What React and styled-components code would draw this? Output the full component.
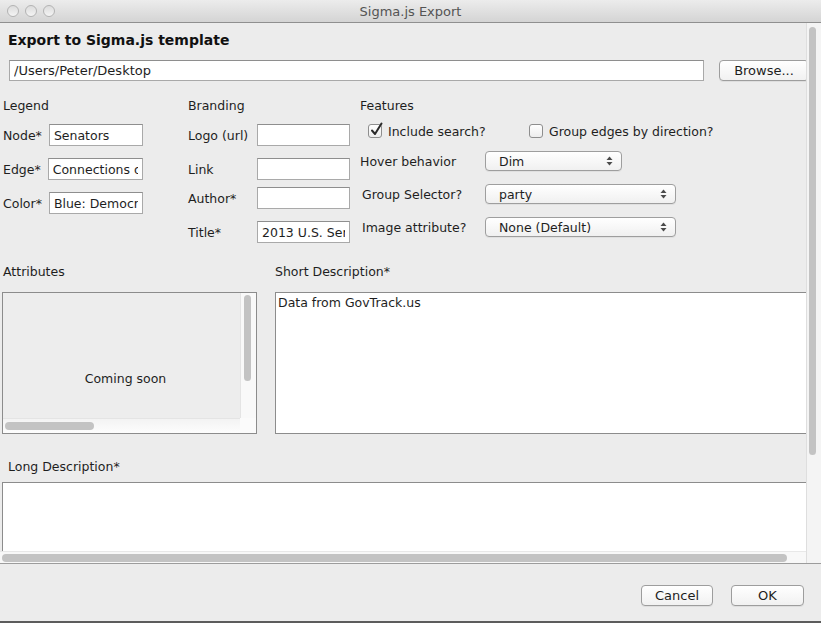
import React from 'react';
import styled, { createGlobalStyle } from 'styled-components';

const GlobalStyle = createGlobalStyle`
  html, body {
    margin: 0;
    padding: 0;
    background: #ececec;
  }
  body {
    font-family: "DejaVu Sans", "Lucida Grande", sans-serif;
    font-size: 12.5px;
    color: #1e1e1e;
  }
  * { box-sizing: border-box; }
`;

const Window = styled.div`
  width: 821px;
  height: 623px;
  display: flex;
  flex-direction: column;
  background: #ececec;
  overflow: hidden;
  border-bottom: 2px solid #5c5c5c;
`;

const TitleBar = styled.div`
  height: 23px;
  flex: none;
  display: grid;
  grid-template-columns: 1fr auto 1fr;
  align-items: center;
  background: linear-gradient(#ececec, #d4d4d4);
  border-bottom: 1px solid #8f8f8f;
`;

const Lights = styled.div`
  display: flex;
  gap: 6px;
  padding-left: 7px;
`;

const Light = styled.span`
  width: 12px;
  height: 12px;
  border-radius: 50%;
  border: 1px solid #b3b3b3;
  background: linear-gradient(#dcdcdc, #f4f4f4);
`;

const WindowTitle = styled.div`
  font-size: 13px;
  color: #545454;
`;

const Body = styled.div`
  height: 541px;
  flex: none;
  display: flex;
  border-bottom: 1px solid #9c9c9c;
`;

const ScrollColumn = styled.div`
  width: 806px;
  display: flex;
  flex-direction: column;
`;

const Viewport = styled.div`
  flex: 1;
  overflow: hidden;
  display: flex;
  flex-direction: column;
`;

const HScroll = styled.div`
  height: 12px;
  flex: none;
  padding: 2px 19px 2px 2px;
  background: #f8f8f8;
  border-top: 1px solid #e8e8e8;
`;

const HThumb = styled.div`
  height: 8px;
  border-radius: 4px;
  background: #c3c3c3;
  width: ${p => p.$width};
`;

const VScroll = styled.div`
  width: 15px;
  flex: none;
  padding: 4px 6px 0 2px;
  background: #f4f4f4;
  border-left: 1px solid #dedede;
`;

const VThumb = styled.div`
  width: 7px;
  height: ${p => p.$height}px;
  border-radius: 4px;
  background: #c3c3c3;
`;

const Heading = styled.h1`
  margin: 8px 0 0 8px;
  font-size: 14px;
  line-height: 18px;
  font-weight: bold;
  color: #111;
`;

const PathRow = styled.div`
  margin-top: 11px;
  display: flex;
  gap: 15px;
  padding-left: 9px;
`;

const TextField = styled.input`
  height: ${p => p.$h || 22}px;
  width: ${p => (p.$w ? `${p.$w}px` : 'auto')};
  flex: ${p => (p.$grow ? 1 : 'none')};
  min-width: 0;
  margin: 0;
  padding: 0 4px;
  font: inherit;
  font-size: ${p => p.$fs || 12.5}px;
  color: #1e1e1e;
  background: #fff;
  border: 1px solid #a9a9a9;
  border-top-color: #8e8e8e;
  outline: none;
`;

const PushButton = styled.button`
  width: ${p => p.$w}px;
  height: 21px;
  flex: none;
  margin: 0;
  padding: 0;
  font: inherit;
  font-size: 13px;
  color: #1e1e1e;
  background: linear-gradient(#ffffff, #f1f1f1);
  border: 1px solid #9d9d9d;
  border-radius: 4px;
  box-shadow: 0 1px 0 rgba(0, 0, 0, 0.06);
`;

const Sections = styled.div`
  margin-top: 17px;
  display: flex;
  padding-left: 3px;
`;

const Column = styled.div`
  width: ${p => p.$w}px;
  margin-right: ${p => p.$mr || 0}px;
  display: flex;
  flex-direction: column;
  flex: none;
`;

const SectionLabel = styled.div`
  line-height: 16px;
`;

const LegendRow = styled.div`
  margin-top: ${p => p.$mt}px;
  display: flex;
  align-items: center;
  gap: 7px;
`;

const BrandRow = styled.div`
  margin-top: ${p => p.$mt}px;
  display: grid;
  grid-template-columns: 69px 93px;
  align-items: center;
`;

const CheckRow = styled.div`
  margin-top: 9px;
  height: 16px;
  display: grid;
  grid-template-columns: 161px auto;
  align-items: center;
  padding-left: 8px;
`;

const CheckItem = styled.label`
  display: flex;
  align-items: center;
  gap: 6px;
`;

const Box = styled.span`
  position: relative;
  width: 14px;
  height: 14px;
  border: 1px solid #8e8e8e;
  border-radius: 3px;
  background: linear-gradient(#ffffff, #ededed);
`;

const Tick = styled.svg`
  position: absolute;
  left: 1px;
  top: -3px;
`;

const SelectRow = styled.div`
  margin-top: ${p => p.$mt}px;
  display: grid;
  grid-template-columns: 125px auto;
  align-items: center;
  padding-left: ${p => p.$pl || 0}px;
`;

const SelectBox = styled.div`
  width: ${p => p.$w}px;
  height: 20px;
  display: flex;
  align-items: center;
  justify-content: space-between;
  padding: 0 8px 0 13px;
  background: linear-gradient(#ffffff, #f0f0f0);
  border: 1px solid #9e9e9e;
  border-radius: 4px;
  box-shadow: 0 1px 0 rgba(0, 0, 0, 0.05);
  margin-left: ${p => -(p.$pl || 0)}px;
`;

const Panels = styled.div`
  margin-top: 21px;
  display: flex;
  padding-left: 2px;
  gap: 18px;
`;

const Panel = styled.div`
  width: ${p => p.$w}px;
  flex: none;
  display: flex;
  flex-direction: column;
`;

const PanelLabel = styled.div`
  line-height: 16px;
  margin: 0 0 12px ${p => p.$ml || 0}px;
`;

const AttrBox = styled.div`
  height: 142px;
  display: grid;
  grid-template-columns: 1fr 16px;
  grid-template-rows: 1fr 15px;
  border: 1px solid #8c8c8c;
  background: #ededed;
`;

const AttrContent = styled.div`
  display: flex;
  justify-content: center;
  padding: 78px 0 0 8px;
  line-height: 16px;
`;

const InnerVTrack = styled.div`
  background: #f9f9f9;
  border-left: 1px solid #e4e4e4;
  padding: 2px 0 0 3px;
`;

const InnerHTrack = styled.div`
  background: linear-gradient(#f3f3f3, #fdfdfd);
  border-top: 1px solid #e4e4e4;
  padding: 3px 0 0 2px;
`;

const Corner = styled.div`
  background: #fbfbfb;
`;

const TextArea = styled.div`
  height: ${p => p.$h}px;
  width: ${p => p.$w}px;
  flex: none;
  background: #fff;
  border: 1px solid #8c8c8c;
  border-right: none;
  border-bottom-width: ${p => (p.$open ? 0 : 1)}px;
  padding: 2px 2px;
  line-height: 16px;
`;

const LongBlock = styled.div`
  margin-top: 25px;
  display: flex;
  flex-direction: column;
  padding-left: 2px;
`;

const Footer = styled.div`
  flex: 1;
  display: flex;
  justify-content: flex-end;
  align-items: flex-start;
  gap: 18px;
  padding: 21px 17px 0 0;
`;

function Checkbox({ checked, children }) {
  return (
    <CheckItem>
      <Box>
        {checked && (
          <Tick width="14" height="15" viewBox="0 0 14 15">
            <path d="M2 8.5 L5 12 L11.5 1.5" fill="none" stroke="#2a2a2a" strokeWidth="2" strokeLinecap="round" strokeLinejoin="round" />
          </Tick>
        )}
      </Box>
      {children}
    </CheckItem>
  );
}

function Stepper() {
  return (
    <svg width="7" height="10" viewBox="0 0 7 10">
      <path d="M3.5 0.5 L6.5 4 L0.5 4 Z" fill="#4a4a4a" />
      <path d="M3.5 9.5 L6.5 6 L0.5 6 Z" fill="#4a4a4a" />
    </svg>
  );
}

function Select({ width, value, pl }) {
  return (
    <SelectBox $w={width} $pl={pl}>
      <span>{value}</span>
      <Stepper />
    </SelectBox>
  );
}

export default function App() {
  return (
    <Window>
      <GlobalStyle />
      <TitleBar>
        <Lights>
          <Light />
          <Light />
          <Light />
        </Lights>
        <WindowTitle>Sigma.js Export</WindowTitle>
        <div />
      </TitleBar>

      <Body>
        <ScrollColumn>
          <Viewport>
            <Heading>Export to Sigma.js template</Heading>

            <PathRow>
              <TextField $w={695} $h={21} $fs={13} readOnly value="/Users/Peter/Desktop" />
              <PushButton $w={90}>Browse...</PushButton>
            </PathRow>

            <Sections>
              <Column $w={140} $mr={45}>
                <SectionLabel>Legend</SectionLabel>
                <LegendRow $mt={10}>
                  <span>Node*</span>
                  <TextField $grow readOnly value="Senators" />
                </LegendRow>
                <LegendRow $mt={12}>
                  <span>Edge*</span>
                  <TextField $grow readOnly value="Connections of senators" />
                </LegendRow>
                <LegendRow $mt={12}>
                  <span>Color*</span>
                  <TextField $grow readOnly value="Blue: Democrats, Red: Republicans" />
                </LegendRow>
              </Column>

              <Column $w={162} $mr={10}>
                <SectionLabel>Branding</SectionLabel>
                <BrandRow $mt={10}>
                  <span>Logo (url)</span>
                  <TextField readOnly value="" />
                </BrandRow>
                <BrandRow $mt={12}>
                  <span>Link</span>
                  <TextField readOnly value="" />
                </BrandRow>
                <BrandRow $mt={7}>
                  <span>Author*</span>
                  <TextField readOnly value="" />
                </BrandRow>
                <BrandRow $mt={12}>
                  <span>Title*</span>
                  <TextField readOnly value="2013 U.S. Senate" />
                </BrandRow>
              </Column>

              <Column $w={440}>
                <SectionLabel>Features</SectionLabel>
                <CheckRow>
                  <Checkbox checked>Include search?</Checkbox>
                  <Checkbox>Group edges by direction?</Checkbox>
                </CheckRow>
                <SelectRow $mt={12}>
                  <span>Hover behavior</span>
                  <Select width={137} value="Dim" />
                </SelectRow>
                <SelectRow $mt={13} $pl={2}>
                  <span>Group Selector?</span>
                  <Select width={191} value="party" pl={2} />
                </SelectRow>
                <SelectRow $mt={13} $pl={2}>
                  <span>Image attribute?</span>
                  <Select width={191} value="None (Default)" pl={2} />
                </SelectRow>
              </Column>
            </Sections>

            <Panels>
              <Panel $w={255}>
                <PanelLabel $ml={1}>Attributes</PanelLabel>
                <AttrBox>
                  <AttrContent>Coming soon</AttrContent>
                  <InnerVTrack>
                    <VThumb $height={86} />
                  </InnerVTrack>
                  <InnerHTrack>
                    <HThumb $width="89px" />
                  </InnerHTrack>
                  <Corner />
                </AttrBox>
              </Panel>
              <Panel $w={560}>
                <PanelLabel>Short Description*</PanelLabel>
                <TextArea $h={142} $w={560}>Data from GovTrack.us</TextArea>
              </Panel>
            </Panels>

            <LongBlock>
              <PanelLabel $ml={6} style={{ marginBottom: 7 }}>Long Description*</PanelLabel>
              <TextArea $h={90} $w={820} $open />
            </LongBlock>
          </Viewport>
          <HScroll>
            <HThumb $width="100%" />
          </HScroll>
        </ScrollColumn>
        <VScroll>
          <VThumb $height={428} />
        </VScroll>
      </Body>

      <Footer>
        <PushButton $w={72}>Cancel</PushButton>
        <PushButton $w={73}>OK</PushButton>
      </Footer>
    </Window>
  );
}
